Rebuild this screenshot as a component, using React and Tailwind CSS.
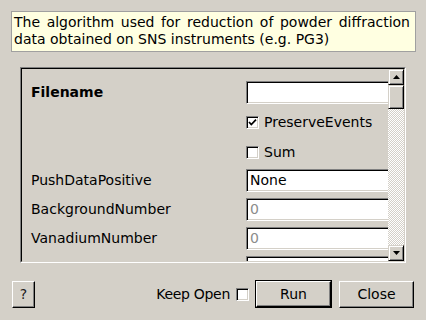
import React from 'react'

// Windows-style bevels used throughout the dialog
const raised = 'border border-t-white border-l-white border-r-black border-b-black shadow-[inset_-1px_-1px_#808080]'
const scrollBevel = 'border border-t-[#d4d0c8] border-l-[#d4d0c8] border-r-black border-b-black shadow-[inset_1px_1px_#fff,inset_-1px_-1px_#808080]'
const sunken = 'border border-t-[#808080] border-l-[#808080] border-r-white border-b-white shadow-[inset_1px_1px_#000,inset_-1px_-1px_#d4d0c8]'

function CheckBox({ checked }) {
    return (
        <span className={`inline-flex items-center justify-center w-[13px] h-[13px] shrink-0 bg-white ${sunken}`}>
            {checked && (
                <svg width="9" height="9" viewBox="0 0 9 9">
                    <path d="M1 4 L3.3 6.6 L8 1.6" stroke="#000" strokeWidth="1.7" fill="none" />
                </svg>
            )}
        </span>
    )
}

function Field({ value, dim }) {
    return (
        <div className={`w-[170px] h-[23px] bg-white flex items-center pl-[3px] ${sunken} ${dim ? 'text-[#8c8c8c]' : 'text-black'}`}>
            {value}
        </div>
    )
}

const rows = [
    { label: 'Filename', bold: true, h: 'h-[30px]', control: <Field value="" /> },
    { label: '', h: 'h-[31px]', control: <label className="flex items-center gap-[5px]"><CheckBox checked />PreserveEvents</label> },
    { label: '', h: 'h-[28px]', control: <label className="flex items-center gap-[5px]"><CheckBox />Sum</label> },
    { label: 'PushDataPositive', h: 'h-[29px]', control: <Field value="None" /> },
    { label: 'BackgroundNumber', h: 'h-[29px]', control: <Field value="0" dim /> },
    { label: 'VanadiumNumber', h: 'h-[29px]', control: <Field value="0" dim /> },
    { label: 'VanadiumBackgroundNumber', h: 'h-[29px]', control: <Field value="0" dim /> },
]

export default function App() {
    return (
        <div className="w-[426px] h-[320px] overflow-hidden bg-[#d4d0c8] text-black text-[14px] font-['DejaVu_Sans',sans-serif] pt-[11px]">
            {/* description tooltip */}
            <div className="ml-[11px] w-[405px] h-[41px] bg-[#ffffe1] border border-[#a0a0a0] pl-[2px] pr-[5px] pt-[2px] leading-[17px] text-justify">
                The algorithm used for reduction of powder diffraction data obtained on SNS instruments (e.g. PG3)
            </div>

            {/* property scroll area */}
            <div className="mt-[15px] ml-[20px] w-[386px] h-[196px] border border-t-[#808080] border-l-[#808080] border-r-white border-b-white">
                <div className="h-full flex border border-t-black border-l-black border-r-[#d4d0c8] border-b-[#d4d0c8]">
                    <div className="flex-1 overflow-hidden pt-[8px]">
                        {rows.map((r, i) => (
                            <div key={i} className={`flex items-center ${r.h}`}>
                                <div className={`w-[224px] shrink-0 pl-[9px] whitespace-nowrap ${r.bold ? 'font-bold' : ''}`}>{r.label}</div>
                                <div className="shrink-0">{r.control}</div>
                            </div>
                        ))}
                    </div>
                    <div className="w-[16px] shrink-0 flex flex-col">
                        <div className={`h-[16px] flex items-center justify-center ${scrollBevel}`}>
                            <svg width="7" height="4" viewBox="0 0 7 4"><path d="M3.5 0 L7 4 L0 4 Z" fill="#000" /></svg>
                        </div>
                        <div className={`h-[24px] bg-[#d4d0c8] ${scrollBevel}`} />
                        <div className="flex-1 bg-[image:repeating-conic-gradient(#fff_0%_25%,#d4d0c8_0%_50%)] bg-[length:2px_2px]" />
                        <div className={`h-[16px] flex items-center justify-center ${scrollBevel}`}>
                            <svg width="7" height="4" viewBox="0 0 7 4"><path d="M0 0 L7 0 L3.5 4 Z" fill="#000" /></svg>
                        </div>
                    </div>
                </div>
            </div>

            {/* bottom buttons */}
            <div className="mt-[17px] h-[28px] flex items-center pl-[12px] pr-[12px]">
                <button className={`w-[23px] h-[27px] flex items-center justify-center text-[#202020] ${raised}`}>?</button>
                <div className="flex-1" />
                <span className="whitespace-nowrap tracking-[-0.3px]">Keep Open</span>
                <span className="ml-[6px] flex"><CheckBox /></span>
                <button className="ml-[6px] w-[77px] h-[28px] border border-black">
                    <span className={`w-full h-full flex items-center justify-center ${raised}`}>Run</span>
                </button>
                <button className={`ml-[7px] w-[75px] h-[27px] flex items-center justify-center ${raised}`}>Close</button>
            </div>
        </div>
    )
}
